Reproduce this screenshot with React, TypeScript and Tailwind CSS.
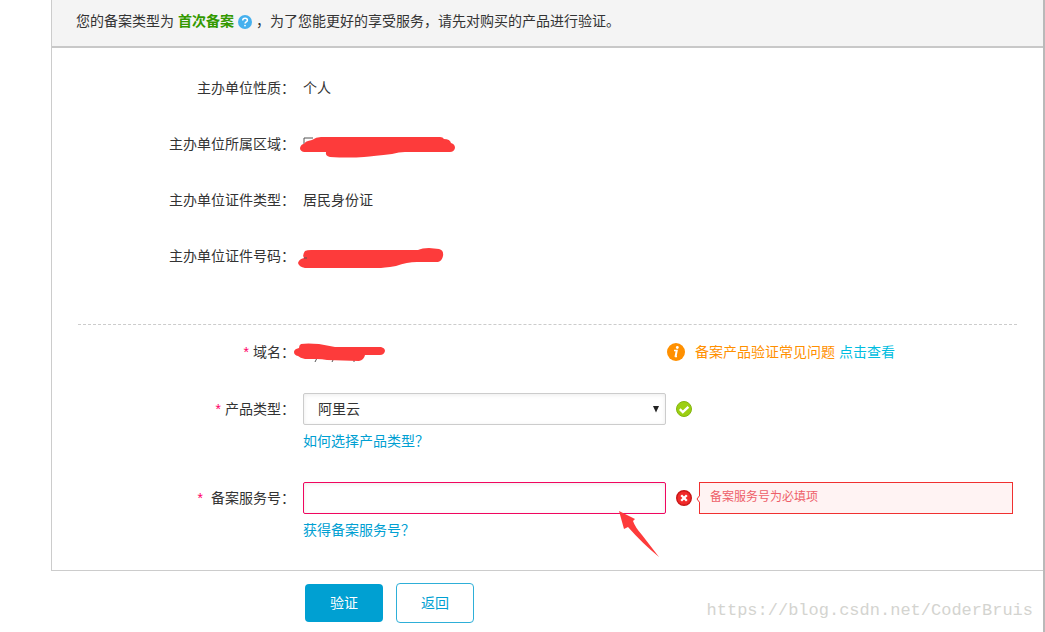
import { useState } from 'react';
import type { ReactNode } from 'react';

const INFO_ROWS = [
  { label: '主办单位性质', value: '个人' },
  { label: '主办单位所属区域', value: <RegionScribble /> },
  { label: '主办单位证件类型', value: '居民身份证' },
  { label: '主办单位证件号码', value: <IdScribble /> },
];

function RegionScribble() {
  return (
    <svg className="absolute -left-1 -top-3 h-7 w-40" viewBox="0 0 160 28" aria-hidden="true">
      <path d="M5 13V6h9" fill="none" stroke="#555" strokeWidth="1" />
      <path
        d="M13 8 Q17 5 22 5 L141 5 Q144 5 145 7 Q151 7 152 11 Q156 12 156 16 Q155 20 151 20 L106 20 Q100 20 93 22 Q75 24 65 25 Q50 26 31 25 Q26 24 27 20 L5 20 Q1 19 1 16 Q2 12 5 12 Q6 9 13 8Z"
        fill="#fd3b3b"
      />
    </svg>
  );
}

function IdScribble() {
  return (
    <svg className="absolute -left-2 -top-3 h-7 w-40" viewBox="0 0 160 28" aria-hidden="true">
      <path
        d="M10 7 Q12 6 16 6 L123 6 Q127 4 134 4 L144 5 Q149 6 148 12 Q147 17 143 18 L122 18 Q112 18 101 22 Q88 24 83 24 L10 24 Q4 23 3 19 Q4 15 9 14 Q7 11 10 7Z"
        fill="#fd3b3b"
      />
      <path d="M9 14h3" stroke="#555" strokeWidth="1" />
    </svg>
  );
}

function DomainScribble() {
  return (
    <svg className="absolute -left-3 -top-3 h-6 w-28" viewBox="0 0 112 24" aria-hidden="true">
      <path d="M26 18l-2 4M43 18l-2 4M63 18v4" stroke="#555" strokeWidth="1" />
      <path
        d="M10 4 Q16 3 28 4 L44 7 L90 7 Q94 8 94 11 Q93 15 89 15 L74 15 Q73 20 68 21 L36 20 Q31 19 26 19 L14 19 Q9 18 7 16 Q3 15 3 12 Q3 9 8 8 Q8 5 10 4Z"
        fill="#fd3b3b"
      />
    </svg>
  );
}

function HelpIcon() {
  return (
    <svg className="mx-1 inline-block size-3.5" viewBox="0 0 14 14" aria-hidden="true">
      <circle cx="7" cy="7" r="7" fill="#45b0ee" />
      <path
        d="M4.7 5.4C4.7 4 5.7 3.2 7.1 3.2s2.3.8 2.3 2c0 1.7-2.3 1.7-2.3 3.3"
        fill="none"
        stroke="#fff"
        strokeWidth="1.5"
      />
      <circle cx="7" cy="10.6" r="0.9" fill="#fff" />
    </svg>
  );
}

function InfoIcon() {
  return (
    <svg className="size-[18px] shrink-0" viewBox="0 0 18 18" aria-hidden="true">
      <circle cx="9" cy="9" r="9" fill="#ff9000" />
      <circle cx="10.3" cy="4.5" r="1.4" fill="#fff" />
      <path d="M7 7.4h3L8.8 13.6h1.2M9.5 7.4L8.2 13.8" fill="none" stroke="#fff" strokeWidth="1.5" />
    </svg>
  );
}

function SuccessIcon() {
  return (
    <svg className="size-4 shrink-0" viewBox="0 0 16 16" aria-hidden="true">
      <circle cx="8" cy="8" r="7.5" fill="#9ccf12" stroke="#83b50f" />
      <path d="M3.8 8.2l3 2.9 5.6-5.3" fill="none" stroke="#fff" strokeWidth="2.3" />
    </svg>
  );
}

function ErrorIcon() {
  return (
    <svg className="size-4 shrink-0" viewBox="0 0 16 16" aria-hidden="true">
      <circle cx="8" cy="8" r="7.3" fill="#f12a2a" stroke="#c81717" strokeWidth="1.4" />
      <path d="M5.2 5.2l5.6 5.6M10.8 5.2l-5.6 5.6" stroke="#fff" strokeWidth="2.3" />
    </svg>
  );
}

function RowLabel({ children, htmlFor }: { children: ReactNode; htmlFor: string }) {
  return (
    <label htmlFor={htmlFor} className="w-[243px] shrink-0 text-right">
      {children}：
    </label>
  );
}

function Required({ wide = false }: { wide?: boolean }) {
  return <span className={wide ? 'mr-2 text-[#f06]' : 'mr-1 text-[#f06]'}>*</span>;
}

export default function App() {
  const [product, setProduct] = useState('aliyun');
  const [serviceNo, setServiceNo] = useState('');

  return (
    <div className="min-h-screen border-r-2 border-[#b9b9b9] bg-white pl-[51px] font-['Liberation_Sans','Noto_Sans_CJK_SC',sans-serif] text-sm text-[#333]">
      <main className="border-b border-l border-[#ccc]">
        <header className="border-b-2 border-[#c8c8c8] bg-[#f4f4f4] px-6 pt-[9px] pb-[13px] leading-6">
          您的备案类型为 <strong className="font-bold text-[#390]">首次备案</strong>
          <HelpIcon />
          ，为了您能更好的享受服务，请先对购买的产品进行验证。
        </header>

        <form id="verify-form" className="pt-3 pb-6" onSubmit={(e) => e.preventDefault()}>
          <dl>
            {INFO_ROWS.map((row) => (
              <div key={row.label} className="flex h-14 items-center gap-2">
                <dt className="w-[243px] shrink-0 text-right">{row.label}：</dt>
                <dd className="relative">{row.value}</dd>
              </div>
            ))}
          </dl>

          <hr className="mx-[26px] mt-10 border-t border-dashed border-[#ccc]" />

          <div className="flex h-[54px] items-center">
            <span className="w-[243px] shrink-0 text-right">
              <Required />
              域名：
            </span>
            <div className="relative ml-2 w-[364px]">
              <DomainScribble />
            </div>
            <InfoIcon />
            <p className="ml-2.5 text-[#ff9000]">
              备案产品验证常见问题{' '}
              <a href="#faq" className="text-[#00bde0]">
                点击查看
              </a>
            </p>
          </div>

          <div className="mt-3.5 flex items-center gap-2.5">
            <div className="flex items-center gap-2">
              <RowLabel htmlFor="product">
                <Required />
                产品类型
              </RowLabel>
              <div className="relative w-[363px]">
                <select
                  id="product"
                  value={product}
                  onChange={(e) => setProduct(e.target.value)}
                  className="block h-8 w-full appearance-none rounded-xs border border-[#ccc] bg-white px-3.5 shadow-[inset_0_1px_4px_#00000014] outline-none"
                >
                  <option value="aliyun">阿里云</option>
                </select>
                <svg className="pointer-events-none absolute top-3 right-1.5 size-2" viewBox="0 0 8 8" aria-hidden="true">
                  <path d="M1 1h6L4 7.5z" fill="#222" />
                </svg>
              </div>
            </div>
            <SuccessIcon />
          </div>
          <a href="#product-help" className="ml-[251px] inline-block align-top leading-8 text-[#00a0d2]">
            如何选择产品类型？
          </a>

          <div className="mt-[25px] flex items-center gap-2.5">
            <div className="flex items-center gap-2">
              <RowLabel htmlFor="service-no">
                <Required wide />
                备案服务号
              </RowLabel>
              <div className="relative w-[363px]">
                <input
                  id="service-no"
                  type="text"
                  value={serviceNo}
                  onChange={(e) => setServiceNo(e.target.value)}
                  aria-invalid="true"
                  aria-describedby="service-no-error"
                  className="block h-8 w-full rounded-xs border border-[#f0065f] bg-white px-3.5 shadow-[inset_0_1px_4px_#00000014] outline-none"
                />
                <svg className="pointer-events-none absolute top-7 right-1.5 h-12 w-[42px]" viewBox="0 0 42 48" aria-hidden="true">
                  <path d="M1 1L17 9L15 11Q17 17 24 25L41 47Q24 33 10 17L6 19Z" fill="#fd3b3b" />
                </svg>
              </div>
            </div>
            <ErrorIcon />
            <div
              id="service-no-error"
              role="alert"
              className="relative -ml-[3px] mr-[30px] h-8 flex-1 border border-[#f03030] bg-[#fff3f3] px-2.5 text-xs leading-7 text-[#ee5f69]"
            >
              <svg className="absolute top-3 -left-1 h-2 w-1" viewBox="0 0 4 8" aria-hidden="true">
                <path d="M4 0L1 4l3 4" fill="#fff3f3" stroke="#f03030" />
              </svg>
              备案服务号为必填项
            </div>
          </div>
          <a href="#service-help" className="ml-[251px] inline-block align-top leading-8 text-[#00a0d2]">
            获得备案服务号？
          </a>
        </form>
      </main>

      <footer className="flex items-center justify-between pt-3 pr-2.5 pl-[254px]">
        <div className="flex items-center gap-[13px]">
          <button type="submit" form="verify-form" className="h-[38px] w-[78px] rounded bg-[#00a0d2] text-white">
            验证
          </button>
          <button type="button" className="h-10 w-[78px] rounded border border-[#2eafd8] bg-white text-[#00a0d2]">
            返回
          </button>
        </div>
        <span className="pt-4 font-['Liberation_Mono',monospace] text-[17px] leading-6 text-[#d4d4d0]">
          https://blog.csdn.net/CoderBruis
        </span>
      </footer>
    </div>
  );
}
